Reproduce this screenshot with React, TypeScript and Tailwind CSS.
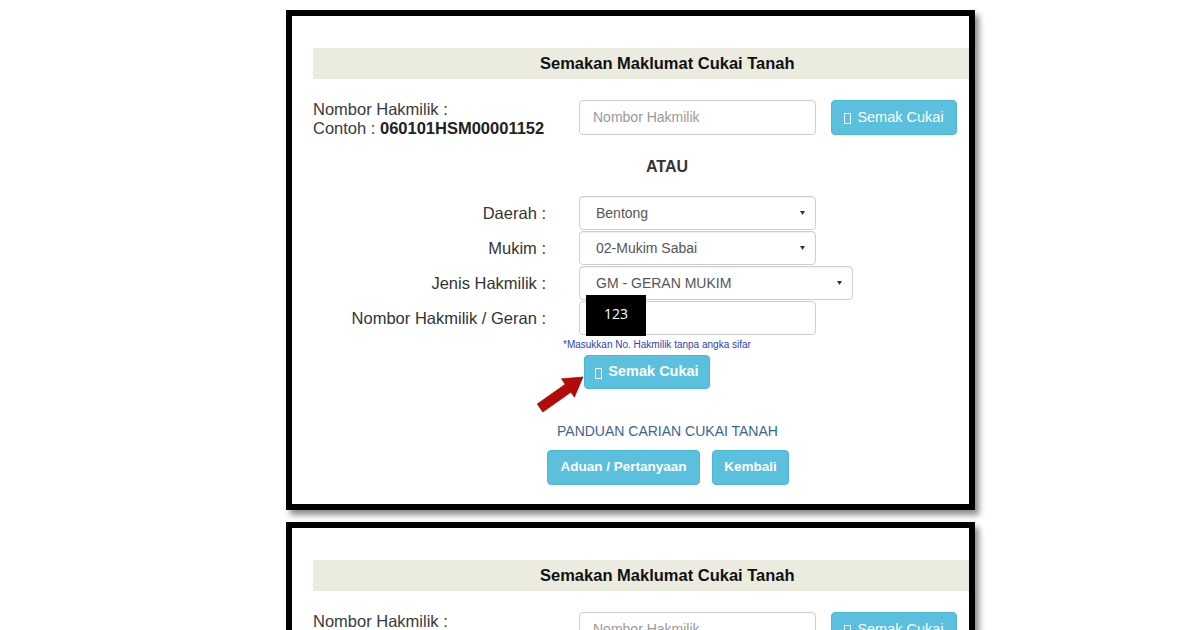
import React from 'react'

// little "missing glyph" box shown before the button label
function Glyph() {
  return <span className="inline-block w-[7px] h-[11px] border border-white mr-[6px] translate-y-[1px]" />
}

function Caret() {
  return (
    <svg width="5" height="4" viewBox="0 0 5 4" className="shrink-0">
      <path d="M0 0 L5 0 L2.5 4 Z" fill="#333" />
    </svg>
  )
}

function SelectBox({ value, width }: { value: string; width: string }) {
  return (
    <div
      className={`${width} h-[34px] border border-[#cfcfcf] rounded-[4px] bg-white flex items-center justify-between pl-[16px] pr-[10px] text-[14px] text-[#555] shadow-[inset_0_1px_1px_rgba(0,0,0,0.06)]`}
    >
      <span>{value}</span>
      <Caret />
    </div>
  )
}

function FormLabel({ children }: { children: React.ReactNode }) {
  return <div className="w-[234px] text-right text-[16.5px] text-[#333] pr-[1px]">{children}</div>
}

function InfoButton({ children, className }: { children: React.ReactNode; className: string }) {
  return (
    <div
      className={`bg-[#5bc0de] border border-[#4fb5d4] rounded-[4px] text-white flex items-center justify-center ${className}`}
    >
      {children}
    </div>
  )
}

function Panel() {
  return (
    <div className="relative w-[689px] h-[500px] shrink-0 border-[6px] border-black bg-white shadow-[4px_5px_6px_rgba(0,0,0,0.45)] pl-[21px] pt-[32px]">
      <div className="h-[31px] bg-[#ebebdf] flex items-center pl-[227px] text-[16.5px] font-bold text-[#111]">
        Semakan Maklumat Cukai Tanah
      </div>

      <div className="mt-[21px] flex items-start">
        <div className="w-[266px] text-[16.5px] leading-[19px] text-[#3a3a3a]">
          <div>Nombor Hakmilik :</div>
          <div>
            Contoh : <span className="font-bold text-[#222]">060101HSM00001152</span>
          </div>
        </div>
        <div className="w-[237px] h-[35px] border border-[#cfcfcf] rounded-[4px] flex items-center pl-[13px] text-[14px] text-[#999]">
          Nombor Hakmilik
        </div>
        <InfoButton className="ml-[15px] w-[126px] h-[35px] text-[14.5px]">
          <Glyph />
          Semak Cukai
        </InfoButton>
      </div>

      <div className="mt-[19px] ml-[333px] text-[16px] leading-[20px] font-bold text-[#333]">ATAU</div>

      <div className="mt-[19px] flex flex-col gap-[1px]">
        <div className="flex items-center gap-[32px]">
          <FormLabel>Daerah :</FormLabel>
          <SelectBox value="Bentong" width="w-[237px]" />
        </div>
        <div className="flex items-center gap-[32px]">
          <FormLabel>Mukim :</FormLabel>
          <SelectBox value="02-Mukim Sabai" width="w-[237px]" />
        </div>
        <div className="flex items-center gap-[32px]">
          <FormLabel>Jenis Hakmilik :</FormLabel>
          <SelectBox value="GM - GERAN MUKIM" width="w-[274px]" />
        </div>
        <div className="flex items-center gap-[32px]">
          <FormLabel>Nombor Hakmilik / Geran :</FormLabel>
          <div className="relative w-[237px] h-[34px] border border-[#cfcfcf] rounded-[4px] bg-white">
            <div className="absolute left-[6px] top-[-7px] w-[60px] h-[41px] bg-black text-white text-[14px] font-['Open_Sans',sans-serif] text-center pt-[8px]">
              123
            </div>
          </div>
        </div>
      </div>

      <div className="mt-[4px] ml-[250px] text-[10px] leading-[11px] text-[#3041b0]">
        *Masukkan No. Hakmilik tanpa angka sifar
      </div>

      <InfoButton className="mt-[5px] ml-[271px] w-[126px] h-[34px] text-[14.5px] font-bold">
        <Glyph />
        Semak Cukai
      </InfoButton>

      <div className="mt-[34px] ml-[244px] text-[14px] leading-[16px] text-[#3b6591]">PANDUAN CARIAN CUKAI TANAH</div>

      <div className="mt-[11px] ml-[234px] flex gap-[12px]">
        <InfoButton className="w-[153px] h-[35px] text-[13.5px] font-bold">Aduan / Pertanyaan</InfoButton>
        <InfoButton className="w-[77px] h-[35px] text-[13.5px] font-bold">Kembali</InfoButton>
      </div>

      <svg width="50" height="40" viewBox="0 0 50 40" className="absolute left-[244px] top-[358px]">
        <polygon
          points="1.2,29.9 29.2,10.3 25.4,4.8 47,3 38.4,23.3 34.9,18.2 6.8,38.1"
          fill="#b40a0a"
          stroke="#8a0000"
          strokeWidth="0.6"
        />
      </svg>
    </div>
  )
}

export default function App() {
  return (
    <div className="w-[1200px] h-[630px] overflow-hidden bg-white pl-[286px] pt-[10px] flex flex-col gap-[12px] font-['Liberation_Sans',Arial,sans-serif]">
      <Panel />
      <Panel />
    </div>
  )
}
